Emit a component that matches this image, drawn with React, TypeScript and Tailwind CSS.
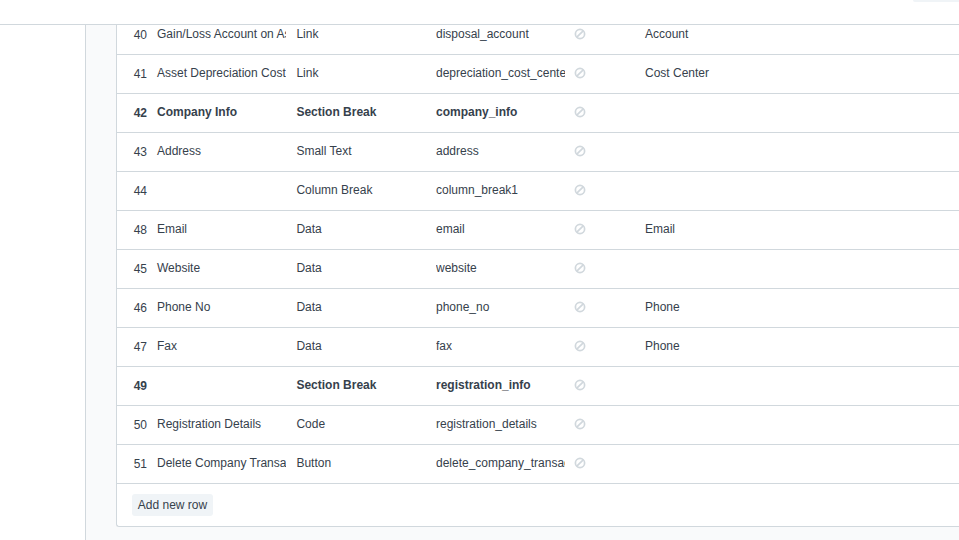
type Row = {
  idx: number;
  label: string;
  type: string;
  name: string;
  options: string;
  bold?: boolean;
};

const rows: Row[] = [
  { idx: 40, label: "Gain/Loss Account on Asset Disposal", type: "Link", name: "disposal_account", options: "Account" },
  { idx: 41, label: "Asset Depreciation Cost Center", type: "Link", name: "depreciation_cost_center", options: "Cost Center" },
  { idx: 42, label: "Company Info", type: "Section Break", name: "company_info", options: "", bold: true },
  { idx: 43, label: "Address", type: "Small Text", name: "address", options: "" },
  { idx: 44, label: "", type: "Column Break", name: "column_break1", options: "" },
  { idx: 48, label: "Email", type: "Data", name: "email", options: "Email" },
  { idx: 45, label: "Website", type: "Data", name: "website", options: "" },
  { idx: 46, label: "Phone No", type: "Data", name: "phone_no", options: "Phone" },
  { idx: 47, label: "Fax", type: "Data", name: "fax", options: "Phone" },
  { idx: 49, label: "", type: "Section Break", name: "registration_info", options: "", bold: true },
  { idx: 50, label: "Registration Details", type: "Code", name: "registration_details", options: "" },
  { idx: 51, label: "Delete Company Transactions", type: "Button", name: "delete_company_transactions", options: "" },
];

// read-only marker, slash runs bottom-left to top-right
function ReadOnlyIcon() {
  return (
    <svg width="12" height="12" viewBox="0 0 12 12" fill="none" stroke="#d1d8dd" strokeWidth="1.7">
      <circle cx="6" cy="6" r="4.6" />
      <path d="M2.8 9.2 9.2 2.8" />
    </svg>
  );
}

function GridRow({ row }: { row: Row }) {
  return (
    <div
      className={`flex h-[39px] items-center border-b border-[#d1d8dd] pb-[3px] text-[#36414c] ${
        row.bold ? "font-bold" : ""
      }`}
    >
      <div className="w-[30px] pt-[2px] text-right">{row.idx}</div>
      <div className="w-[139.4px] shrink-0 overflow-hidden whitespace-nowrap pl-[10px]">{row.label}</div>
      <div className="w-[139.6px] shrink-0 overflow-hidden whitespace-nowrap pl-[10px]">{row.type}</div>
      <div className="ml-[10px] w-[129px] shrink-0 overflow-hidden whitespace-nowrap">{row.name}</div>
      <div className="w-[70px] shrink-0 pl-[9px] pt-[1px]">
        <ReadOnlyIcon />
      </div>
      <div className="whitespace-nowrap pl-[10px]">{row.options}</div>
    </div>
  );
}

export default function App() {
  return (
    <div className="flex h-[540px] w-[959px] flex-col overflow-hidden bg-white font-['Liberation_Sans',sans-serif] text-[12px] leading-[18px]">
      <header className="flex h-[25px] shrink-0 justify-end border-b border-[#d1d8dd]">
        <div className="h-[2px] w-[46px] rounded-bl-[4px] bg-[#f0f4f7]" />
      </header>
      <div className="flex min-h-0 flex-1">
        <aside className="w-[85px] shrink-0" />
        <main className="min-w-0 flex-1 overflow-hidden border-l border-[#d1d8dd] bg-[#f9fafb] pl-[30px]">
          <section className="-mt-[9px] rounded-bl-[3px] border-b border-l border-[#d1d8dd] bg-white">
            {rows.map((row) => (
              <GridRow key={row.idx} row={row} />
            ))}
            <div className="px-[15px] py-[10px]">
              <button className="flex h-[22px] w-[81px] items-center justify-center rounded-[3px] bg-[#f0f4f7] text-[#36414c]">
                Add new row
              </button>
            </div>
          </section>
        </main>
      </div>
    </div>
  );
}
